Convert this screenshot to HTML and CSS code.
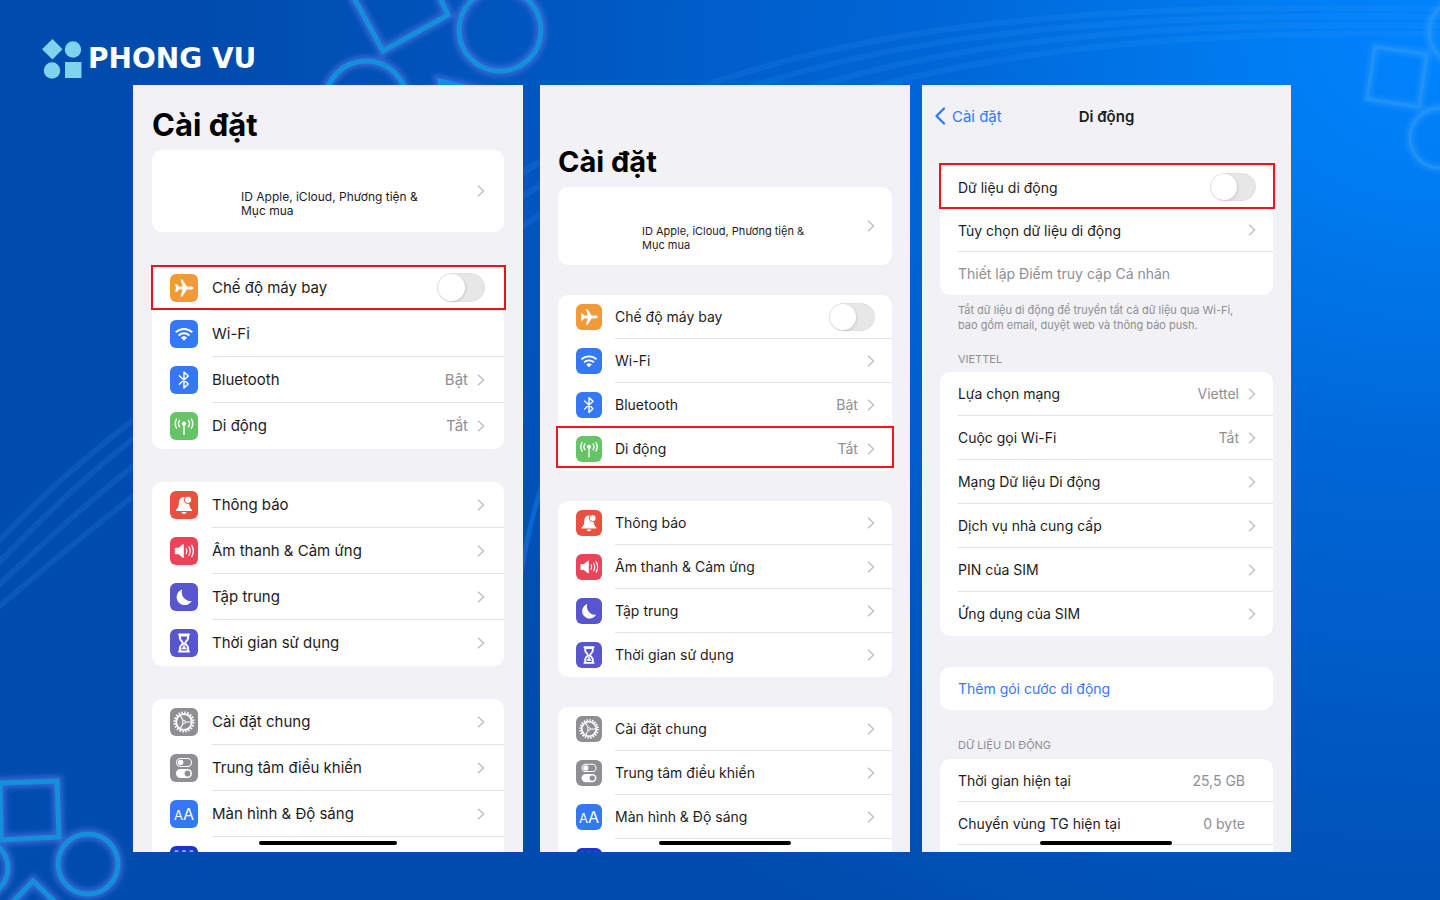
FILE: index.html
```html
<!DOCTYPE html>
<html lang="vi">
<head>
<meta charset="utf-8">
<meta name="viewport" content="width=device-width, initial-scale=1">
<title>Phong Vu – Cài đặt di động</title>
<link rel="stylesheet" href="styles.css">
</head>
<body>
<svg class="defs" aria-hidden="true">
  <symbol id="i-plane" viewBox="0 0 28 28"><path fill="#fff" d="M23.400 14c0 .9-1.200 1.500-2.600 1.500h-4l-4.300 6.900h-2l2.200-6.900H8.700l-1.700 2.300H5.100l.9-3.800-.9-3.800H7l1.700 2.300h4L10.500 5.600h2l4.300 6.900h4c1.400 0 2.600.6 2.600 1.500z"/></symbol>
  <symbol id="i-wifi" viewBox="0 0 28 28"><g fill="none" stroke="#fff" stroke-width="2"><path d="M5.800 12.200a12 12 0 0 1 16.400 0"/><path d="M8.700 15.400a7.800 7.800 0 0 1 10.600 0"/></g><path fill="#fff" d="M11 17.800a4.300 4.300 0 0 1 6 0l-3 3z"/></symbol>
  <symbol id="i-bt" viewBox="0 0 28 28"><path fill="none" stroke="#fff" stroke-width="1.500" stroke-linejoin="round" stroke-linecap="round" d="M9.300 9.800l9 8.200-4.300 4V6l4.300 4-9 8.200"/></symbol>
  <symbol id="i-cell" viewBox="0 0 28 28"><g fill="none" stroke="#fff" stroke-width="1.400" stroke-linecap="round"><path d="M14 12v10.500"/><path d="M9.600 8.400a5.500 5.500 0 0 0 0 6.400M18.400 8.400a5.500 5.500 0 0 1 0 6.400M6.600 7a8.800 8.800 0 0 0 0 9.200M21.400 7a8.800 8.800 0 0 1 0 9.200"/></g><circle cx="14" cy="11.600" r="2.200" fill="#fff"/></symbol>
  <symbol id="i-bell" viewBox="0 0 28 28"><path fill="#fff" d="M14 6c-3.700.2-5 3-5.100 6-.1 3.600-.9 5-2.900 6.900V20h16v-1.100c-2-1.900-2.800-3.300-2.900-6.900 0-3-1.400-5.800-5.100-6zM11.400 20.900h5.200c-.5 1.300-1.400 1.900-2.600 1.900s-2.100-.6-2.600-1.900z"/><circle cx="18" cy="8.800" r="3.700" fill="#fff" stroke="#e9503f" stroke-width="1"/></symbol>
  <symbol id="i-sound" viewBox="0 0 28 28"><path fill="#fff" d="M4.800 11.500c0-.5.300-.8.800-.8h2.900l4.300-3.400c.5-.4 1-.2 1 .4v12.600c0 .6-.5.800-1 .4l-4.300-3.400H5.600c-.5 0-.8-.3-.8-.8z"/><g fill="none" stroke="#fff" stroke-width="1.300" stroke-linecap="round"><path d="M16.200 11.500a5 5 0 0 1 0 5M19 9.900a8.300 8.300 0 0 1 0 8.200M21.700 8.400a11 11 0 0 1 0 11.200"/></g></symbol>
  <symbol id="i-moon" viewBox="0 0 28 28"><path fill="#fff" d="M12.200 6.500a8.700 8.700 0 0 0 9.500 11.400A8 8 0 1 1 12.200 6.500z"/></symbol>
  <symbol id="i-glass" viewBox="0 0 28 28"><path fill="none" stroke="#fff" stroke-width="2" stroke-linecap="round" stroke-linejoin="round" d="M9 5.500h10M9 22.500h10M9.900 6v3.200c0 2 2.900 3.200 2.900 4.800s-2.900 2.800-2.900 4.800V22M18.100 6v3.200c0 2-2.900 3.200-2.900 4.800s2.900 2.800 2.900 4.800V22"/><path fill="#fff" d="M10.500 6h7v1.500h-7zM14.700 14v3.500l2.500 2.700H10.800l2.500-2.700V14z"/></symbol>
  <symbol id="i-gear" viewBox="0 0 28 28"><g fill="none" stroke="#fff"><circle cx="14" cy="14" r="9.500" stroke-width="2.200" stroke-dasharray="1.600 1.385"/><circle cx="14" cy="14" r="7.800" stroke-width="1.800"/><path stroke-width="1.200" d="M15.500 14h6M13.300 12.700l-3.200-5.400M13.300 15.300l-3.200 5.400"/><circle cx="14" cy="14" r="1.500" stroke-width="1"/></g></symbol>
  <symbol id="i-ctrl" viewBox="0 0 28 28"><rect x="6.500" y="4.500" width="15" height="8" rx="4" fill="none" stroke="#fff" stroke-width="1.100"/><circle cx="10.600" cy="8.500" r="2.800" fill="#fff"/><rect x="6" y="15" width="16" height="9" rx="4.500" fill="#fff"/><circle cx="17.500" cy="19.500" r="2.900" fill="#8e8e93"/></symbol>
  <symbol id="i-apps" viewBox="0 0 28 28"><g fill="#7f9cff"><rect x="4.500" y="4" width="4" height="4" rx="1"/><rect x="12" y="4" width="4" height="4" rx="1"/><rect x="19.500" y="4" width="4" height="4" rx="1"/><rect x="4.500" y="12" width="4" height="4" rx="1"/><rect x="12" y="12" width="4" height="4" rx="1"/><rect x="19.500" y="12" width="4" height="4" rx="1"/></g></symbol>
  <symbol id="i-chev" viewBox="0 0 8 12"><path fill="none" stroke="#c1c1c4" stroke-width="1.500" d="M1 .8L6.500 6 1 11.200"/></symbol>
</svg>

<svg class="backdrop" viewBox="0 0 1440 900" preserveAspectRatio="xMidYMid slice" aria-hidden="true">
  <defs>
    <filter id="soft" x="-10%" y="-10%" width="120%" height="120%"><feGaussianBlur stdDeviation="2.500"/></filter>
    <g id="shapes">
      <path d="M348-13l35 64 65-36-14-30"/>
      <circle cx="500" cy="30" r="41"/>
      <circle cx="366" cy="102" r="41"/>
      <path d="M490 93l-50-12 5 24"/>
      <path d="M0 783l57-2 2 56-58 3z"/>
      <circle cx="88" cy="864" r="30"/>
      <circle cx="-20" cy="868" r="28"/>
      <path d="M11 904l22-23 24 23"/>
    </g>
    <g id="faint">
      <path d="M1375 47l52 7-8 53-52-8z"/>
      <circle cx="1440" cy="138" r="30"/>
      <circle cx="1462" cy="32" r="33"/>
    </g>
  </defs>
  <g class="waves">
    <path d="M560 150C760 40 1000 0 1440 9"/>
    <path d="M580 160C780 50 1020 10 1440 17"/>
    <path d="M610 170C810 62 1040 18 1440 26"/>
    <path d="M650 170C850 74 1060 28 1440 34"/>
    <path d="M-20 560C60 480 120 400 560 150"/>
    <path d="M-20 582C60 502 120 420 560 150"/>
    <path d="M-20 602C70 522 130 442 580 160"/>
    <path d="M-20 622C80 542 150 462 610 170"/>
  </g>
  <path class="streak" d="M505 680C522 560 535 440 600 400"/>
  <use href="#shapes" class="glow" filter="url(#soft)"/>
  <use href="#shapes" class="neon"/>
  <use href="#faint" class="faint-glow" filter="url(#soft)"/>
  <use href="#faint" class="faint"/>
</svg>

<header class="brand">
  <svg class="brand__mark" viewBox="0 0 40 40" aria-hidden="true"><g fill="#7fd3ec"><path d="M10.500 0L20.500 10.300 10.500 20.500 0 10.300z"/><circle cx="31" cy="10.500" r="8.200"/><circle cx="10" cy="31.500" r="8.200"/><path d="M23 23h16.500v16H23z"/></g></svg>
  <span class="brand__name">PHONG VU</span>
</header>

<main class="screens">
  <section class="phone phone--a">
    <h1 class="title">Cài đặt</h1>
    <a class="card profile" href="#"><span class="profile__text">ID Apple, iCloud, Phương tiện &amp; Mục mua</span><svg class="chev"><use href="#i-chev"/></svg></a>
    <div class="card">
      <label class="row row--marked"><svg class="icon orange"><use href="#i-plane"/></svg><span class="row__body"><span class="row__label">Chế độ máy bay</span><input class="switch" type="checkbox" role="switch"></span></label>
      <a class="row" href="#"><svg class="icon blue"><use href="#i-wifi"/></svg><span class="row__body"><span class="row__label">Wi-Fi</span></span></a>
      <a class="row" href="#"><svg class="icon blue"><use href="#i-bt"/></svg><span class="row__body"><span class="row__label">Bluetooth</span><span class="value">Bật</span><svg class="chev"><use href="#i-chev"/></svg></span></a>
      <a class="row" href="#"><svg class="icon green"><use href="#i-cell"/></svg><span class="row__body"><span class="row__label">Di động</span><span class="value">Tắt</span><svg class="chev"><use href="#i-chev"/></svg></span></a>
    </div>
    <div class="card">
      <a class="row" href="#"><svg class="icon red"><use href="#i-bell"/></svg><span class="row__body"><span class="row__label">Thông báo</span><svg class="chev"><use href="#i-chev"/></svg></span></a>
      <a class="row" href="#"><svg class="icon pink"><use href="#i-sound"/></svg><span class="row__body"><span class="row__label">Âm thanh &amp; Cảm ứng</span><svg class="chev"><use href="#i-chev"/></svg></span></a>
      <a class="row" href="#"><svg class="icon indigo"><use href="#i-moon"/></svg><span class="row__body"><span class="row__label">Tập trung</span><svg class="chev"><use href="#i-chev"/></svg></span></a>
      <a class="row" href="#"><svg class="icon indigo"><use href="#i-glass"/></svg><span class="row__body"><span class="row__label">Thời gian sử dụng</span><svg class="chev"><use href="#i-chev"/></svg></span></a>
    </div>
    <div class="card">
      <a class="row" href="#"><svg class="icon gray"><use href="#i-gear"/></svg><span class="row__body"><span class="row__label">Cài đặt chung</span><svg class="chev"><use href="#i-chev"/></svg></span></a>
      <a class="row" href="#"><svg class="icon gray"><use href="#i-ctrl"/></svg><span class="row__body"><span class="row__label">Trung tâm điều khiển</span><svg class="chev"><use href="#i-chev"/></svg></span></a>
      <a class="row" href="#"><span class="icon blue aa"><span class="aa__small">A</span><span class="aa__big">A</span></span><span class="row__body"><span class="row__label">Màn hình &amp; Độ sáng</span><svg class="chev"><use href="#i-chev"/></svg></span></a>
      <div class="row"><svg class="icon navy"><use href="#i-apps"/></svg><span class="row__body"></span></div>
    </div>
    <div class="home"></div>
  </section>

  <section class="phone phone--b">
    <h1 class="title">Cài đặt</h1>
    <a class="card profile" href="#"><span class="profile__text">ID Apple, iCloud, Phương tiện &amp; Mục mua</span><svg class="chev"><use href="#i-chev"/></svg></a>
    <div class="card">
      <label class="row"><svg class="icon orange"><use href="#i-plane"/></svg><span class="row__body"><span class="row__label">Chế độ máy bay</span><input class="switch" type="checkbox" role="switch"></span></label>
      <a class="row" href="#"><svg class="icon blue"><use href="#i-wifi"/></svg><span class="row__body"><span class="row__label">Wi-Fi</span><svg class="chev"><use href="#i-chev"/></svg></span></a>
      <a class="row row--before-marked" href="#"><svg class="icon blue"><use href="#i-bt"/></svg><span class="row__body"><span class="row__label">Bluetooth</span><span class="value">Bật</span><svg class="chev"><use href="#i-chev"/></svg></span></a>
      <a class="row row--marked" href="#"><svg class="icon green"><use href="#i-cell"/></svg><span class="row__body"><span class="row__label">Di động</span><span class="value">Tắt</span><svg class="chev"><use href="#i-chev"/></svg></span></a>
    </div>
    <div class="card">
      <a class="row" href="#"><svg class="icon red"><use href="#i-bell"/></svg><span class="row__body"><span class="row__label">Thông báo</span><svg class="chev"><use href="#i-chev"/></svg></span></a>
      <a class="row" href="#"><svg class="icon pink"><use href="#i-sound"/></svg><span class="row__body"><span class="row__label">Âm thanh &amp; Cảm ứng</span><svg class="chev"><use href="#i-chev"/></svg></span></a>
      <a class="row" href="#"><svg class="icon indigo"><use href="#i-moon"/></svg><span class="row__body"><span class="row__label">Tập trung</span><svg class="chev"><use href="#i-chev"/></svg></span></a>
      <a class="row" href="#"><svg class="icon indigo"><use href="#i-glass"/></svg><span class="row__body"><span class="row__label">Thời gian sử dụng</span><svg class="chev"><use href="#i-chev"/></svg></span></a>
    </div>
    <div class="card">
      <a class="row" href="#"><svg class="icon gray"><use href="#i-gear"/></svg><span class="row__body"><span class="row__label">Cài đặt chung</span><svg class="chev"><use href="#i-chev"/></svg></span></a>
      <a class="row" href="#"><svg class="icon gray"><use href="#i-ctrl"/></svg><span class="row__body"><span class="row__label">Trung tâm điều khiển</span><svg class="chev"><use href="#i-chev"/></svg></span></a>
      <a class="row" href="#"><span class="icon blue aa"><span class="aa__small">A</span><span class="aa__big">A</span></span><span class="row__body"><span class="row__label">Màn hình &amp; Độ sáng</span><svg class="chev"><use href="#i-chev"/></svg></span></a>
      <div class="row"><svg class="icon navy"><use href="#i-apps"/></svg><span class="row__body"></span></div>
    </div>
    <div class="home"></div>
  </section>

  <section class="phone phone--c">
    <nav class="nav">
      <a class="nav__back" href="#"><svg class="nav__chev" viewBox="0 0 12 18" aria-hidden="true"><path fill="none" stroke="#2f7bf6" stroke-width="2.300" stroke-linecap="round" stroke-linejoin="round" d="M10 1.500L2.500 9 10 16.500"/></svg>Cài đặt</a>
      <h1 class="nav__title">Di động</h1>
    </nav>
    <div class="card">
      <label class="row row--marked"><span class="row__body"><span class="row__label">Dữ liệu di động</span><input class="switch" type="checkbox" role="switch"></span></label>
      <a class="row" href="#"><span class="row__body"><span class="row__label">Tùy chọn dữ liệu di động</span><svg class="chev"><use href="#i-chev"/></svg></span></a>
      <div class="row row--off"><span class="row__body"><span class="row__label">Thiết lập Điểm truy cập Cá nhân</span></span></div>
    </div>
    <p class="note">Tắt dữ liệu di động để truyền tất cả dữ liệu qua Wi-Fi, bao gồm email, duyệt web và thông báo push.</p>
    <h2 class="caption caption--first">VIETTEL</h2>
    <div class="card card--tall">
      <a class="row" href="#"><span class="row__body"><span class="row__label">Lựa chọn mạng</span><span class="value">Viettel</span><svg class="chev"><use href="#i-chev"/></svg></span></a>
      <a class="row" href="#"><span class="row__body"><span class="row__label">Cuộc gọi Wi-Fi</span><span class="value">Tắt</span><svg class="chev"><use href="#i-chev"/></svg></span></a>
      <a class="row" href="#"><span class="row__body"><span class="row__label">Mạng Dữ liệu Di động</span><svg class="chev"><use href="#i-chev"/></svg></span></a>
      <a class="row" href="#"><span class="row__body"><span class="row__label">Dịch vụ nhà cung cấp</span><svg class="chev"><use href="#i-chev"/></svg></span></a>
      <a class="row" href="#"><span class="row__body"><span class="row__label">PIN của SIM</span><svg class="chev"><use href="#i-chev"/></svg></span></a>
      <a class="row" href="#"><span class="row__body"><span class="row__label">Ứng dụng của SIM</span><svg class="chev"><use href="#i-chev"/></svg></span></a>
    </div>
    <div class="card card--add">
      <a class="row row--link" href="#"><span class="row__body"><span class="row__label">Thêm gói cước di động</span></span></a>
    </div>
    <h2 class="caption">DỮ LIỆU DI ĐỘNG</h2>
    <div class="card card--data">
      <div class="row"><span class="row__body"><span class="row__label">Thời gian hiện tại</span><span class="value">25,5 GB</span></span></div>
      <div class="row"><span class="row__body"><span class="row__label">Chuyển vùng TG hiện tại</span><span class="value">0 byte</span></span></div>
      <div class="row"><span class="row__body"></span></div>
    </div>
    <div class="home"></div>
  </section>
</main>
</body>
</html>
```

FILE: styles.css
```css
*, *::before, *::after { box-sizing: border-box; }

body {
  margin: 0;
  height: 100vh;
  display: flex;
  flex-direction: column;
  overflow: hidden;
  font-family: Inter, "Noto Sans", sans-serif;
  background: radial-gradient(ellipse 85% 110% at 100% 5%, #0084ff 0%, #007aee 18%, #0066d6 42%, #0058c2 70%, #004cae 100%);
}

h1, h2, p { margin: 0; }
a { color: inherit; text-decoration: none; }
.defs { position: absolute; width: 0; height: 0; }

.backdrop {
  position: absolute;
  inset: 0;
  width: 100%;
  height: 100%;
  z-index: -1;
  fill: none;
}
.glow { stroke: #4a70e0; stroke-width: 11; opacity: 0.7; }
.neon { stroke: #138fdb; stroke-width: 5; }
.faint-glow { stroke: #2c96ff; stroke-width: 8; opacity: 0.6; }
.faint { stroke: #2699f2; stroke-width: 3; opacity: 0.6; }
.waves { stroke: #3d9bff; stroke-width: 6; opacity: 0.14; }
.streak { stroke: #0f7df0; stroke-width: 5; opacity: 0.5; }

.brand {
  display: flex;
  align-items: center;
  gap: 6px;
  height: 85px;
  padding: 32px 42px 0;
  flex: none;
}
.brand__mark { width: 40px; height: 40px; }
.brand__name {
  color: #fff;
  font: bold 28px/32px "DejaVu Sans", sans-serif;
}

.screens {
  flex: 1;
  min-height: 0;
  display: flex;
  padding: 0 149px 48px 133px;
}

.phone {
  position: relative;
  overflow: hidden;
  min-width: 0;
  background: #f1f1f6;
  padding: 0 18px;
  color: #1c1c1e;
  font-size: var(--text);
}
.phone--a {
  flex: 390 1 0;
  margin-right: 17px;
  padding: 0 19px;
  --row: 46px; --gap: 33px; --icon: 28px; --text: 15px; --space: 14px;
  --sw: 48px; --sh: 29px; --end: 19px; --home: 138px;
}
.phone--b {
  flex: 370 1 0;
  margin-right: 12px;
  --row: 44px; --gap: 30px; --icon: 26px; --text: 14px; --space: 13px;
  --sw: 46px; --sh: 28px; --end: 17px; --home: 132px;
}
.phone--c {
  flex: 369 1 0;
  --row: 43px; --gap: 31px; --text: 14px;
  --sw: 46px; --sh: 28px; --end: 17px; --home: 132px;
}

.title {
  font-size: 31px;
  line-height: 40px;
  font-weight: 700;
  color: #000;
}
.phone--a .title { padding-top: 20px; margin-bottom: 5px; }
.phone--b .title { font-size: 29px; padding-top: 57px; margin-bottom: 5px; }

.card {
  display: block;
  background: #fff;
  border-radius: 10px;
}
.card + .card { margin-top: var(--gap); }

.profile {
  display: flex;
  align-items: center;
  justify-content: space-between;
  height: 82px;
  padding: 0 var(--end) 0 89px;
}
.profile__text {
  width: 190px;
  padding-top: 26px;
  font-size: 12px;
  line-height: 14px;
}
.phone--b .profile { height: 78px; padding-left: 84px; }
.phone--b .profile__text { width: 180px; padding-top: 24px; font-size: 11px; }

.row {
  position: relative;
  display: flex;
  align-items: center;
  height: var(--row);
  padding-left: 18px;
}
.row__body {
  flex: 1;
  align-self: stretch;
  display: flex;
  align-items: center;
  padding-right: var(--end);
  border-bottom: 1px solid #e2e2e5;
}
.row:last-child .row__body,
.row--before-marked .row__body { border-bottom-color: transparent; }
.row__label { flex: 1; white-space: nowrap; }
.value { color: #8e8e93; margin-right: 9px; }
.row--off { color: #8e8e93; }
.row--link { color: #3478f6; }
.card--data .value { margin-right: 11px; }

.row--marked::after {
  content: "";
  position: absolute;
  inset: 0 -2px 1px -1px;
  border: 2px solid #e8141c;
}
.phone--b .row--marked::after { inset: -1px -2px 3px; border-color: #f5141a; }
.phone--c .row--marked::after { inset: -3px -2px 0 -1px; border-color: #ee141c; }

.icon {
  width: var(--icon);
  height: var(--icon);
  flex: none;
  margin-right: var(--space);
  border-radius: 6px;
}
.orange { background: #f19a37; }
.blue { background: #3478f6; }
.green { background: #65c466; }
.red { background: #e9503f; }
.pink { background: #eb445a; }
.indigo { background: #5856ce; }
.gray { background: #8e8e93; }
.navy { background: #1a36cf; }

.aa {
  display: flex;
  align-items: baseline;
  justify-content: center;
  color: #fff;
  line-height: var(--icon);
}
.aa__small { font-size: 13px; }
.aa__big { font-size: 16px; }

.chev { width: 8px; height: 12px; flex: none; }

.switch {
  appearance: none;
  flex: none;
  margin: 0;
  width: var(--sw);
  height: var(--sh);
  border-radius: 15px;
  background: #e7e7e8;
  border: 1px solid #e1e1e3;
}
.switch::before {
  content: "";
  display: block;
  height: 100%;
  aspect-ratio: 1;
  border-radius: 50%;
  background: #fff;
  box-shadow: 1px 1px 3px rgba(0, 0, 0, 0.12);
}
.switch:checked { background: #65c466; }
.switch:checked::before { margin-left: auto; }

.home {
  position: absolute;
  left: 50%;
  bottom: 7px;
  width: var(--home);
  height: 4px;
  margin-left: calc(var(--home) / -2);
  border-radius: 2px;
  background: #000;
}

.nav {
  display: grid;
  grid-template-columns: 1fr auto 1fr;
  align-items: center;
  height: 62px;
  margin: 0 -6px 19px;
}
.nav__back { display: flex; align-items: center; gap: 6px; color: #3478f6; font-size: 15px; }
.nav__chev { width: 12px; height: 18px; }
.nav__title { font-size: 15px; font-weight: 600; }

.note {
  padding: 8px 18px 0;
  font-size: 11px;
  line-height: 15px;
  color: #8e8e93;
}
.caption {
  padding: 28px 18px 6px;
  font-size: 11px;
  line-height: 15px;
  font-weight: 400;
  color: #8e8e93;
}
.caption--first { padding-top: 19px; padding-bottom: 5px; }
.card--tall { --row: 44px; }
```
